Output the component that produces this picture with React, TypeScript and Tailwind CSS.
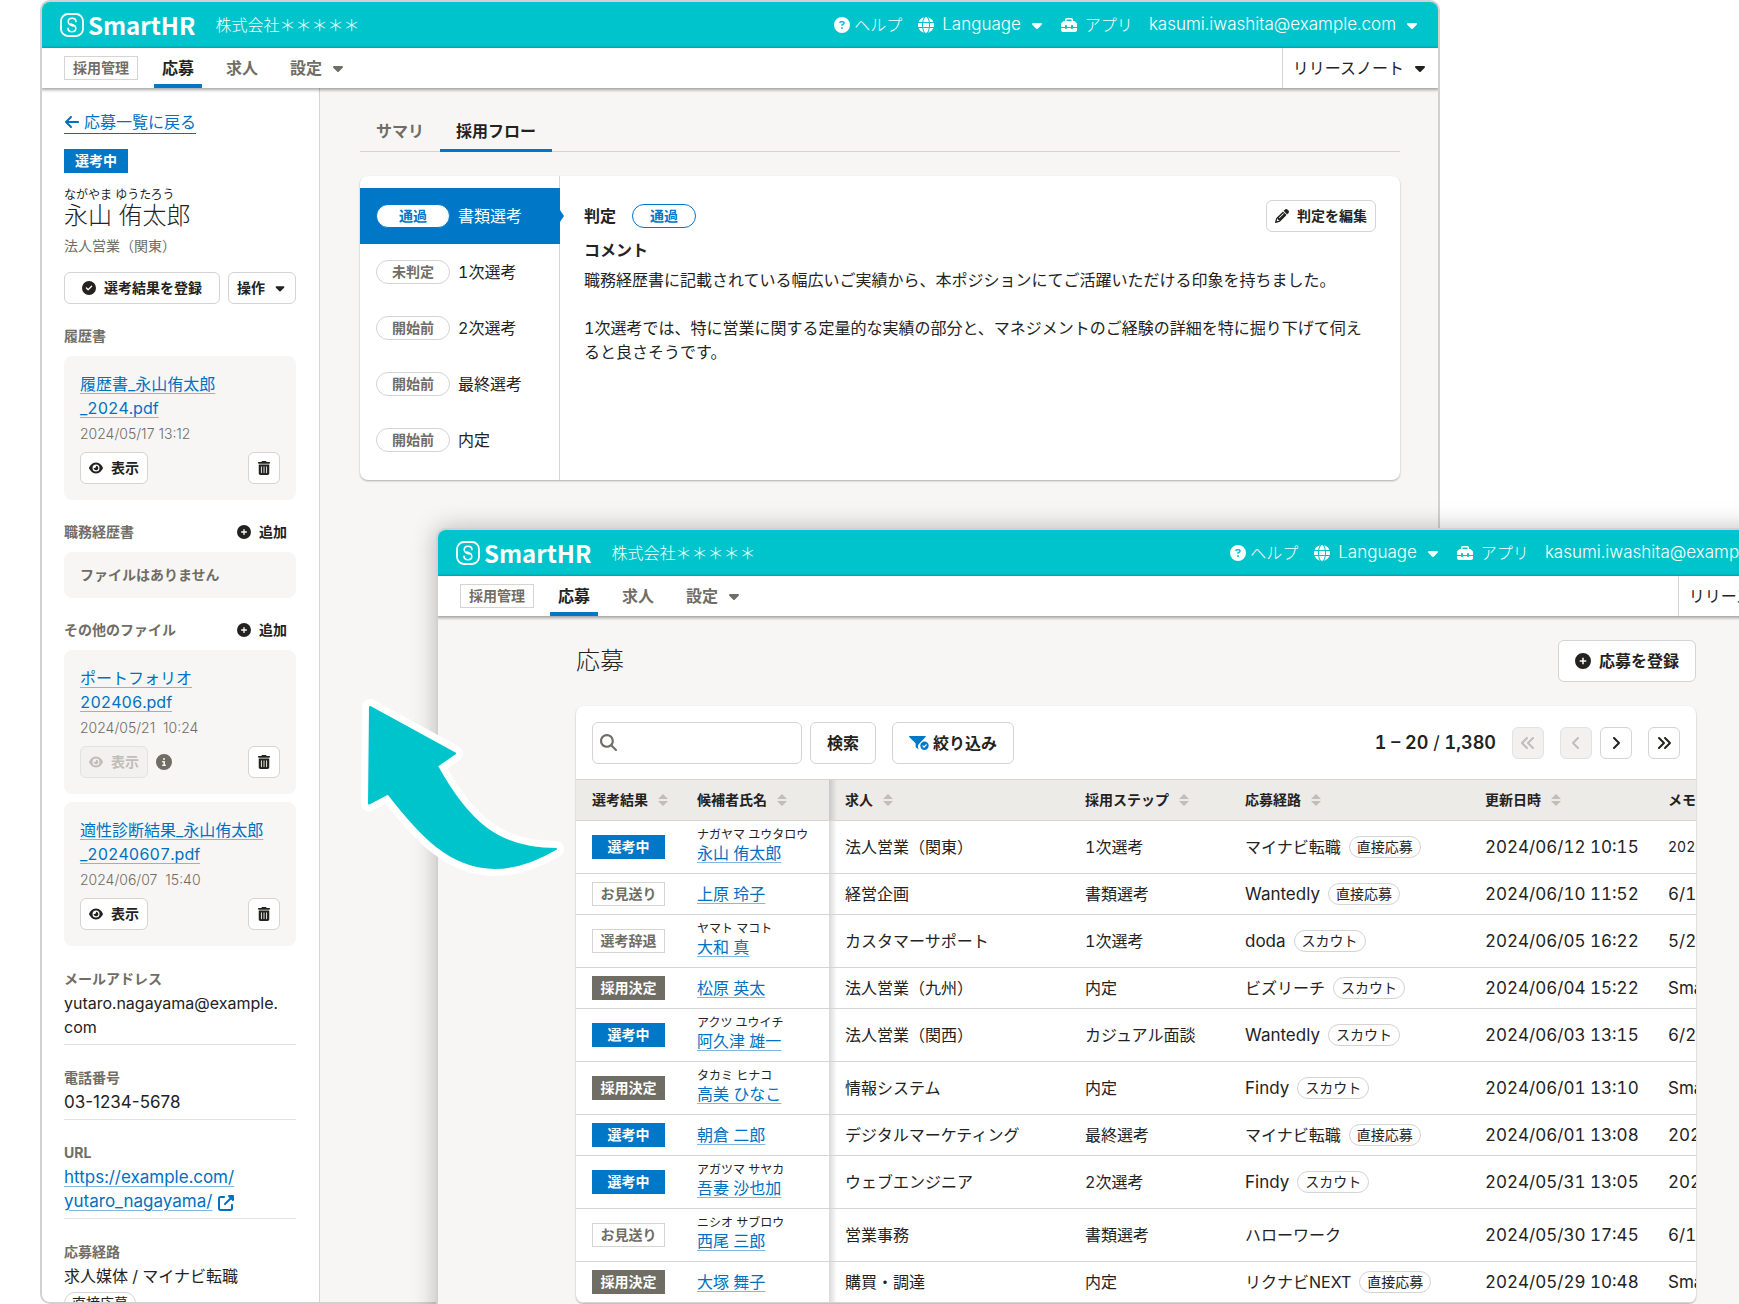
import React from "react";
import {
  FaArrowLeft,
  FaCaretDown,
  FaCircleCheck,
  FaCirclePlus,
  FaCircleInfo,
  FaCircleQuestion,
  FaEye,
  FaGlobe,
  FaMagnifyingGlass,
  FaPencil,
  FaToolbox,
  FaTrashCan,
  FaUpRightFromSquare,
  FaAngleLeft,
  FaAngleRight,
  FaAnglesLeft,
  FaAnglesRight,
} from "react-icons/fa6";

const FONT = "font-['Inter','Noto_Sans_CJK_JP',sans-serif]";

function LogoMark() {
  return (
    <svg viewBox="0 0 24 24" className="size-6" fill="none" stroke="#fff" aria-hidden="true">
      <rect x="1" y="1" width="22" height="22" rx="7" strokeWidth="1.800" />
      <path
        d="M16 8.600C15.900 6.700 14.200 5.300 12.100 5.300 9.900 5.300 8.200 6.800 8.200 8.800c0 1.500.9 2.500 2.300 3.100l2.600 1.100M8 15.400c.1 1.900 1.800 3.300 3.900 3.300 2.200 0 3.900-1.500 3.900-3.500 0-1.500-.9-2.500-2.300-3.100l-2.600-1.100"
        strokeWidth="1.600"
        strokeLinecap="round"
      />
    </svg>
  );
}

function SortIcon() {
  return (
    <svg viewBox="0 0 10 12" className="h-3 w-2.5" fill="#c1bdb7" aria-hidden="true">
      <path d="M5 0 10 5H0zM5 12 0 7h10z" />
    </svg>
  );
}

function FilterIcon() {
  return (
    <svg viewBox="0 0 20 16" className="h-4 w-5" aria-hidden="true">
      <path d="M.6 1h15.600c.6 0 .8.700.4 1.100L10.800 8a5 5 0 0 0-1 6.500L7 12.500a1 1 0 0 1-.4-.8V8.200L.2 2.100C-.2 1.700 0 1 .6 1z" fill="#0077c7" />
      <circle cx="15.500" cy="10.700" r="4.200" fill="#0077c7" />
      <path d="m13.600 10.700 1.400 1.400 2.500-2.600" fill="none" stroke="#fff" strokeWidth="1.100" />
    </svg>
  );
}

function AppHeader() {
  return (
    <>
      <header className="flex h-[46px] shrink-0 items-center justify-between bg-[#00c4cc] pr-[18px] pl-[18px] text-base font-light whitespace-nowrap text-white">
        <div className="flex items-center">
          <a href="#" className="flex items-center gap-1">
            <LogoMark />
            <span className="font-['Noto_Sans_CJK_JP',sans-serif] text-2xl leading-none font-bold">SmartHR</span>
          </a>
          <span className="ml-5">株式会社＊＊＊＊＊</span>
        </div>
        <div className="flex items-center gap-4">
          <a href="#" className="flex items-center gap-1">
            <FaCircleQuestion />
            ヘルプ
          </a>
          <button className="flex items-center gap-2">
            <FaGlobe />
            <span className="text-[17px]">Language</span>
            <FaCaretDown />
          </button>
          <a href="#" className="flex items-center gap-2">
            <FaToolbox />
            アプリ
          </a>
          <button className="flex items-center gap-2">
            <span className="text-[17px]">kasumi.iwashita@example.com</span>
            <FaCaretDown />
          </button>
        </div>
      </header>
      <nav className="relative z-10 flex h-10 shrink-0 items-stretch bg-white pl-[22px] text-base font-bold whitespace-nowrap text-[#706d65] shadow-[0_1px_3px_1px_rgba(0,0,0,0.35)]">
        <span className="mr-4 flex h-6 items-center self-center border border-[#d6d3d0] px-2 text-sm leading-none">採用管理</span>
        <a href="#" aria-current="page" className="mr-4 flex items-center border-b-4 border-[#0077c7] px-2 pt-1 text-[#23221e]">
          応募
        </a>
        <a href="#" className="mr-4 flex items-center px-2">求人</a>
        <button className="flex items-center gap-2 px-2">
          設定
          <FaCaretDown />
        </button>
        <button className="ml-auto flex items-center gap-2 border-l border-[#d6d3d0] px-2.5 font-normal text-[#23221e]">
          リリースノート
          <FaCaretDown />
        </button>
      </nav>
    </>
  );
}

function AppWindow({ className, children }: { className: string; children: React.ReactNode }) {
  return (
    <div className={`flex flex-col overflow-hidden rounded-[10px] border-2 border-[#d2d1cf] bg-[#f7f6f5] ${className}`}>
      <AppHeader />
      {children}
    </div>
  );
}

const btn = "flex items-center justify-center gap-2 rounded-md border border-[#d6d3d0] bg-white font-bold whitespace-nowrap text-[#23221e]";
const link = "text-[#0071c1] underline decoration-[#80b8e0] underline-offset-[3px]";

function FileCard({ lines, date, disabled }: { lines: string[]; date: string; disabled?: boolean }) {
  return (
    <li className="rounded-lg bg-[#f7f6f5] p-4">
      <a href="#" className={link}>
        {lines[0]}
        <br />
        {lines[1]}
      </a>
      <p className="mt-1 text-sm leading-5 font-light whitespace-pre text-[#706d65] proportional-nums">{date}</p>
      <div className="mt-2 flex items-center">
        <button
          disabled={disabled}
          className={
            disabled
              ? "flex h-8 items-center gap-2 rounded-md border border-[#e4e2e0] bg-[#f2f1f0] px-2 text-sm font-bold text-[#c1bdb7]"
              : `${btn} h-8 px-2 text-sm`
          }
        >
          <FaEye />
          表示
        </button>
        {disabled && <FaCircleInfo className="ml-2 text-[#706d65]" />}
        <button aria-label="削除" className={`${btn} ml-auto size-8 text-sm`}>
          <FaTrashCan />
        </button>
      </div>
    </li>
  );
}

function FileSectionHead({ title }: { title: string }) {
  return (
    <div className="flex h-6 items-center justify-between pr-[9px] text-sm font-bold">
      <h2 className="text-[#706d65]">{title}</h2>
      <button className="flex items-center gap-2">
        <FaCirclePlus />
        追加
      </button>
    </div>
  );
}

function Detail({ label, children }: { label: string; children: React.ReactNode }) {
  return (
    <div className="border-b border-[#e4e2e0] pb-[5px]">
      <dt className="text-sm leading-6 font-bold text-[#706d65]">{label}</dt>
      <dd>{children}</dd>
    </div>
  );
}

function Sidebar() {
  return (
    <aside className="w-[278px] shrink-0 border-r border-[#d6d3d0] bg-white pt-[23px] pr-[23px] pl-[22px]">
      <a href="#" className="flex w-fit items-center gap-1 border-b border-[#0071c1] leading-[22px] text-[#0071c1]">
        <FaArrowLeft />
        応募一覧に戻る
      </a>
      <div className="mt-[15px] flex h-6 w-16 items-center justify-center bg-[#0077c7] text-sm font-bold text-white">選考中</div>
      <p className="mt-4 text-xs leading-3">ながやま ゆうたろう</p>
      <h1 className="text-2xl leading-[30px] font-light">永山 侑太郎</h1>
      <p className="mt-[3px] text-sm leading-6 text-[#706d65]">法人営業（関東）</p>
      <div className="mt-3.5 flex gap-2 text-sm">
        <button className={`${btn} h-8 grow`}>
          <FaCircleCheck />
          選考結果を登録
        </button>
        <button className={`${btn} h-8 px-2`}>
          操作
          <FaCaretDown />
        </button>
      </div>
      <h2 className="mt-5 text-sm leading-6 font-bold text-[#706d65]">履歴書</h2>
      <ul className="mt-2">
        <FileCard lines={["履歴書_永山侑太郎", "_2024.pdf"]} date="2024/05/17 13:12" />
      </ul>
      <div className="mt-5">
        <FileSectionHead title="職務経歴書" />
      </div>
      <p className="mt-2 rounded-lg bg-[#f7f6f5] p-4 text-sm leading-[14px] font-bold text-[#706d65]">ファイルはありません</p>
      <div className="mt-5">
        <FileSectionHead title="その他のファイル" />
      </div>
      <ul className="mt-2 flex flex-col gap-2">
        <FileCard lines={["ポートフォリオ", "202406.pdf"]} date="2024/05/21  10:24" disabled />
        <FileCard lines={["適性診断結果_永山侑太郎", "_20240607.pdf"]} date="2024/06/07  15:40" />
      </ul>
      <dl className="mt-[21px] flex flex-col gap-[21px]">
        <Detail label="メールアドレス">
          yutaro.nagayama@example.
          <br />
          com
        </Detail>
        <Detail label="電話番号">
          <span className="text-[17px] proportional-nums">03-1234-5678</span>
        </Detail>
        <Detail label="URL">
          <a href="#" className={`${link} text-[17px]`}>
            https://example.com/
            <br />
            yutaro_nagayama/
          </a>
          <FaUpRightFromSquare className="ml-1.5 inline text-[#0071c1]" />
        </Detail>
        <Detail label="応募経路">
          求人媒体 / マイナビ転職
          <div className="mt-1 flex">
            <Chip>直接応募</Chip>
          </div>
        </Detail>
      </dl>
    </aside>
  );
}

function Chip({ children }: { children: React.ReactNode }) {
  return (
    <span className="inline-flex h-[22px] w-[72px] items-center justify-center rounded-full border border-[#d6d3d0] text-sm">{children}</span>
  );
}

const steps = [
  { status: "通過", name: "書類選考", active: true },
  { status: "未判定", name: "1次選考" },
  { status: "開始前", name: "2次選考" },
  { status: "開始前", name: "最終選考" },
  { status: "開始前", name: "内定" },
];

function FlowPanel() {
  return (
    <main className="min-w-0 grow pt-6 pr-[38px] pl-10">
      <div role="tablist" className="flex border-b border-[#d6d3d0] font-bold">
        <button role="tab" aria-selected="false" className="h-[39px] px-4 pb-0.5 text-[#706d65]">
          サマリ
        </button>
        <button role="tab" aria-selected="true" className="-mb-px h-10 border-b-[3px] border-[#0077c7] px-4">
          採用フロー
        </button>
      </div>
      <section className="mt-6 flex rounded-lg bg-white shadow-[0_1px_2px_rgba(3,3,2,0.3)]">
        <ol className="w-[200px] shrink-0 border-r border-[#d6d3d0] py-3">
          {steps.map((s) =>
            s.active ? (
              <li key={s.name} className="relative -mr-px flex h-14 items-center gap-2 bg-[#0077c7] pl-4 text-white">
                <span className="flex h-6 w-[74px] items-center justify-center rounded-full border border-[#0077c7] bg-white text-sm font-bold text-[#0077c7]">
                  {s.status}
                </span>
                {s.name}
                <span className="absolute top-1/2 left-full -mt-1.5 border-y-[6px] border-l-[4px] border-y-transparent border-l-[#0077c7]" />
              </li>
            ) : (
              <li key={s.name} className="flex h-14 items-center gap-2 pl-4">
                <span className="flex h-6 w-[74px] items-center justify-center rounded-full border border-[#d6d3d0] text-sm font-bold text-[#706d65]">
                  {s.status}
                </span>
                {s.name}
              </li>
            ),
          )}
        </ol>
        <div className="grow p-6">
          <div className="flex h-8 items-center">
            <h2 className="font-bold">判定</h2>
            <span className="ml-4 flex h-6 w-16 items-center justify-center rounded-full border border-[#0077c7] text-sm font-bold text-[#0077c7]">
              通過
            </span>
            <button className={`${btn} ml-auto h-8 px-2 text-sm`}>
              <FaPencil />
              判定を編集
            </button>
          </div>
          <h2 className="mt-1.5 font-bold">コメント</h2>
          <p className="mt-1.5">
            職務経歴書に記載されている幅広いご実績から、本ポジションにてご活躍いただける印象を持ちました。
            <br />
            <br />
            1次選考では、特に営業に関する定量的な実績の部分と、マネジメントのご経験の詳細を特に掘り下げて伺え
            <br />
            ると良さそうです。
          </p>
        </div>
      </section>
    </main>
  );
}

type Row = { status: string; kana?: string; name: string; job: string; step: string; route: string; latin?: boolean; chip?: string; date: string; memo: string };

const rows: Row[] = [
  { status: "選考中", kana: "ナガヤマ ユウタロウ", name: "永山 侑太郎", job: "法人営業（関東）", step: "1次選考", route: "マイナビ転職", chip: "直接応募", date: "2024/06/12 10:15", memo: "2024" },
  { status: "お見送り", name: "上原 玲子", job: "経営企画", step: "書類選考", route: "Wantedly", latin: true, chip: "直接応募", date: "2024/06/10 11:52", memo: "6/1" },
  { status: "選考辞退", kana: "ヤマト マコト", name: "大和 真", job: "カスタマーサポート", step: "1次選考", route: "doda", latin: true, chip: "スカウト", date: "2024/06/05 16:22", memo: "5/2" },
  { status: "採用決定", name: "松原 英太", job: "法人営業（九州）", step: "内定", route: "ビズリーチ", chip: "スカウト", date: "2024/06/04 15:22", memo: "Sma" },
  { status: "選考中", kana: "アクツ ユウイチ", name: "阿久津 雄一", job: "法人営業（関西）", step: "カジュアル面談", route: "Wantedly", latin: true, chip: "スカウト", date: "2024/06/03 13:15", memo: "6/2" },
  { status: "採用決定", kana: "タカミ ヒナコ", name: "高美 ひなこ", job: "情報システム", step: "内定", route: "Findy", latin: true, chip: "スカウト", date: "2024/06/01 13:10", memo: "Sma" },
  { status: "選考中", name: "朝倉 二郎", job: "デジタルマーケティング", step: "最終選考", route: "マイナビ転職", chip: "直接応募", date: "2024/06/01 13:08", memo: "202" },
  { status: "選考中", kana: "アガツマ サヤカ", name: "吾妻 沙也加", job: "ウェブエンジニア", step: "2次選考", route: "Findy", latin: true, chip: "スカウト", date: "2024/05/31 13:05", memo: "202" },
  { status: "お見送り", kana: "ニシオ サブロウ", name: "西尾 三郎", job: "営業事務", step: "書類選考", route: "ハローワーク", date: "2024/05/30 17:45", memo: "6/1" },
  { status: "採用決定", name: "大塚 舞子", job: "購買・調達", step: "内定", route: "リクナビNEXT", chip: "直接応募", date: "2024/05/29 10:48", memo: "Sma" },
];

const statusStyle: Record<string, string> = {
  選考中: "border-[#0077c7] bg-[#0077c7] text-white",
  採用決定: "border-[#706d65] bg-[#706d65] text-white",
  お見送り: "border-[#d6d3d0] bg-white text-[#706d65]",
  選考辞退: "border-[#d6d3d0] bg-white text-[#706d65]",
};

const pinned = "relative after:absolute after:inset-y-0 after:left-full after:w-2 after:bg-linear-to-r after:from-black/15 after:to-transparent after:content-['']";

function ApplicantTable() {
  return (
    <table className="w-[1180px] table-fixed border-collapse text-left whitespace-nowrap">
      <colgroup>
        <col className="w-[105px]" />
        <col className="w-[148px]" />
        <col className="w-[240px]" />
        <col className="w-[160px]" />
        <col className="w-[240px]" />
        <col className="w-[183px]" />
        <col />
      </colgroup>
      <thead>
        <tr className="h-[41px] border-y border-[#d6d3d0] bg-[#edebe8] text-sm">
          {["選考結果", "候補者氏名", "求人", "採用ステップ", "応募経路", "更新日時", "メモ"].map((h, i) => (
            <th key={h} className={i === 1 ? `${pinned} px-4 font-bold` : "px-4 font-bold"}>
              {i === 6 ? (
                h
              ) : (
                <button className="flex items-center gap-2.5">
                  {h}
                  <SortIcon />
                </button>
              )}
            </th>
          ))}
        </tr>
      </thead>
      <tbody>
        {rows.map((r) => (
          <tr key={r.name} className="border-b border-[#d6d3d0]">
            <td className="pl-4">
              <span className={`flex h-6 w-[73px] items-center justify-center border text-sm font-bold ${statusStyle[r.status]}`}>{r.status}</span>
            </td>
            <td className={`${pinned} px-4 py-2`}>
              {r.kana && <div className="text-xs leading-3">{r.kana}</div>}
              <a href="#" className={`${link} block leading-6`}>
                {r.name}
              </a>
            </td>
            <td className="px-4">{r.job}</td>
            <td className="px-4">{r.step}</td>
            <td className="px-4">
              <div className="flex items-center gap-2">
                <span className={r.latin ? "text-[17px]" : "text-base"}>{r.route}</span>
                {r.chip && <Chip>{r.chip}</Chip>}
              </div>
            </td>
            <td className="px-4 text-[17px]">{r.date}</td>
            <td className={r.memo === "2024" ? "px-4 text-sm" : "px-4 text-[17px]"}>{r.memo}</td>
          </tr>
        ))}
      </tbody>
    </table>
  );
}

const pageBtn = "flex size-8 items-center justify-center rounded-md border text-base";
const pageOn = `${pageBtn} border-[#d6d3d0] bg-white text-[#23221e]`;
const pageOff = `${pageBtn} border-[#e4e2e0] bg-[#f2f1f0] text-[#c1bdb7]`;

function ListPage() {
  return (
    <main className="mx-auto w-[1120px] pt-6">
      <div className="flex items-center justify-between">
        <h1 className="text-2xl font-light">応募</h1>
        <button className={`${btn} h-[42px] px-4`}>
          <FaCirclePlus />
          応募を登録
        </button>
      </div>
      <section className="mt-6 overflow-hidden rounded-lg bg-white shadow-[0_1px_2px_rgba(3,3,2,0.3)]">
        <div className="flex items-center p-4 pb-[15px]">
          <div className="relative">
            <FaMagnifyingGlass className="absolute top-3 left-2 text-[17px] text-[#706d65]" />
            <input type="search" aria-label="検索キーワード" className="block h-[42px] w-[210px] rounded-md border border-[#d6d3d0] pl-8" />
          </div>
          <button className={`${btn} ml-2 h-[42px] px-4`}>検索</button>
          <button className="ml-4 flex h-[42px] items-center gap-1 rounded-md border border-[#d6d3d0] bg-white px-4 font-bold">
            <FilterIcon />
            絞り込み
          </button>
          <p className="ml-auto text-lg font-semibold">
            1 – 20 <span className="font-normal">/</span> 1,380
          </p>
          <button disabled aria-label="最初へ" className={`${pageOff} ml-4`}>
            <FaAnglesLeft />
          </button>
          <button disabled aria-label="前へ" className={`${pageOff} ml-4`}>
            <FaAngleLeft />
          </button>
          <button aria-label="次へ" className={`${pageOn} ml-2`}>
            <FaAngleRight />
          </button>
          <button aria-label="最後へ" className={`${pageOn} ml-4`}>
            <FaAnglesRight />
          </button>
        </div>
        <ApplicantTable />
      </section>
    </main>
  );
}

function Arrow() {
  const d = "M370 707 455 753.500 437 766C468 822 498 849 556 849C534 862 515 868 495 868C450 868 420 835 388 793.500L369 803.500Z";
  return (
    <svg viewBox="355 690 220 195" className="absolute top-[690px] left-[355px] h-[195px] w-[220px]" strokeLinejoin="round" aria-hidden="true">
      <path d={d} fill="#fff" stroke="#fff" strokeWidth="16" />
      <path d={d} fill="#00c4cc" stroke="#00c4cc" strokeWidth="2" />
    </svg>
  );
}

export default function App() {
  return (
    <div lang="ja" className={`relative h-screen overflow-hidden bg-white text-base leading-6 text-[#23221e] tabular-nums ${FONT}`}>
      <AppWindow className="mr-[299px] ml-10 h-full">
        <div className="flex grow">
          <Sidebar />
          <FlowPanel />
        </div>
      </AppWindow>
      <AppWindow className="absolute top-[528px] right-[-97px] left-[436px] h-full shadow-[0_0_24px_rgba(0,0,0,0.25)]">
        <ListPage />
      </AppWindow>
      <Arrow />
    </div>
  );
}
